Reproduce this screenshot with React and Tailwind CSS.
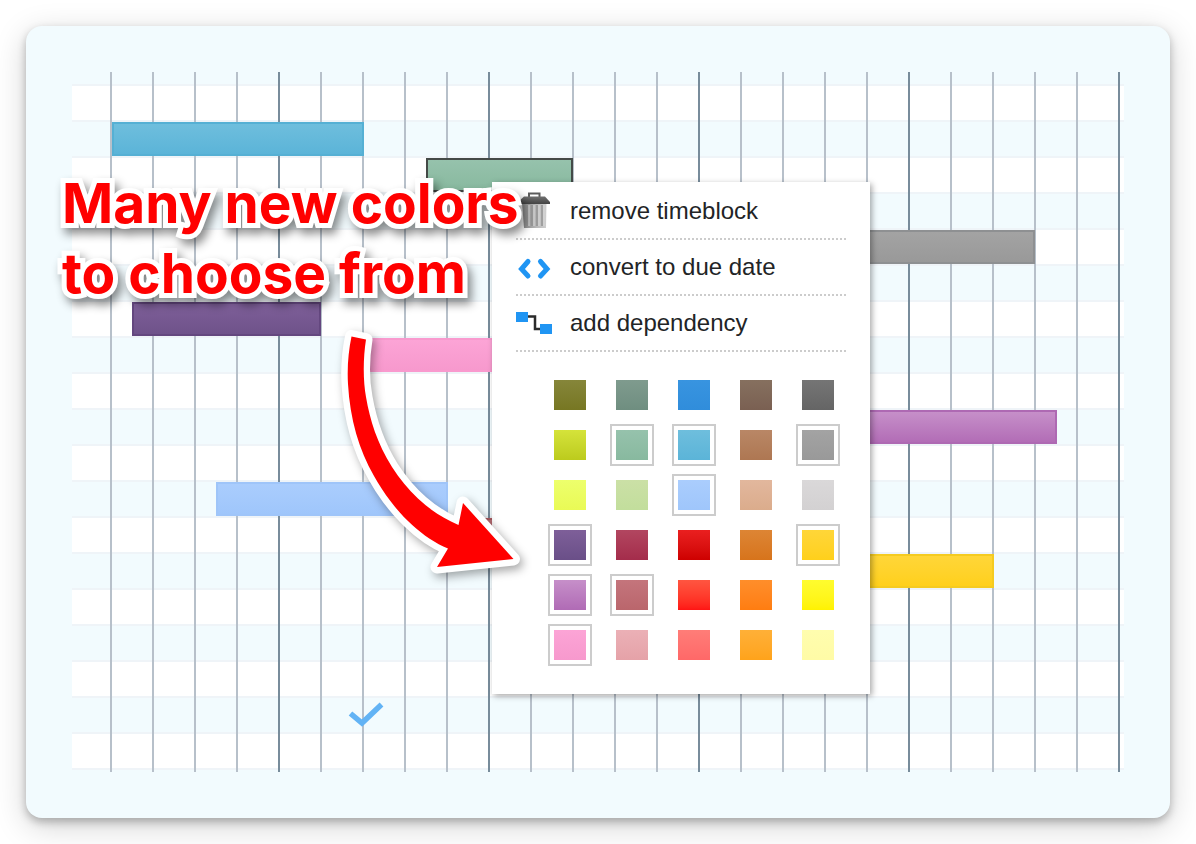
import React from "react";

const ROW_COUNT = 19;
const LINE_COUNT = 25;

const BLOCKS = {
  1: { start: 40, width: 252, tone: "border-[#55b0d4] from-[#6ebedd] to-[#5bb4d8]", label: "Blue timeblock" },
  2: { start: 354, width: 147, tone: "border-[#444a47] from-[#96c2ac] to-[#88b99f]", label: "Green timeblock" },
  4: { start: 700, width: 263, tone: "border-[#8e9092] from-[#a3a3a3] to-[#999999]", label: "Grey timeblock" },
  6: { start: 60, width: 189, tone: "border-[#64477f] from-[#7e5f99] to-[#6f528a]", label: "Purple timeblock" },
  7: { start: 286, width: 180, tone: "border-[#f99ace] from-[#fca4d6] to-[#f799cd]", label: "Pink timeblock" },
  9: { start: 700, width: 285, tone: "border-[#ae69b3] from-[#c68fc9] to-[#b26db6]", label: "Orchid timeblock" },
  11: { start: 144, width: 232, tone: "border-[#9fc5f9] from-[#aacdfd] to-[#9fc6fb]", label: "Sky timeblock" },
  12: { start: 411, width: 60, tone: "border-[#b05f65] from-[#c4757c] to-[#ba666c]", label: "Rose timeblock" },
  13: { start: 700, width: 222, tone: "border-[#f5cb20] from-[#ffd638] to-[#ffd01a]", label: "Yellow timeblock" },
};

const DUE_DATE = { row: 17, start: 274 };

const SWATCHES = [
  ["Olive", "from-[#86863a] to-[#777722]"],
  ["Sage", "from-[#7f9b8e] to-[#6f8e80]"],
  ["Blue", "from-[#3894e0] to-[#308ddb]"],
  ["Cocoa", "from-[#86705f] to-[#7a6052]"],
  ["Charcoal", "from-[#757575] to-[#656565]"],
  ["Lime", "from-[#d5e33a] to-[#bccb1c]"],
  ["Green", "from-[#96c2ac] to-[#88b99f]", true],
  ["Aqua", "from-[#6ebedd] to-[#5bb4d8]", true],
  ["Brown", "from-[#b98766] to-[#ae7752]"],
  ["Grey", "from-[#a3a3a3] to-[#999999]", true],
  ["Light lime", "from-[#edff6c] to-[#e9fa55]"],
  ["Light green", "from-[#cbe0a6] to-[#c2de9c]"],
  ["Sky", "from-[#aacdfd] to-[#9fc6fb]", true],
  ["Tan", "from-[#e2b79d] to-[#dbac8c]"],
  ["Silver", "from-[#dad8d9] to-[#d3d1d2]"],
  ["Purple", "from-[#7e5f99] to-[#6a4f88]", true],
  ["Crimson", "from-[#b24660] to-[#a42c4b]"],
  ["Red", "from-[#ea1f1f] to-[#ce0000]"],
  ["Burnt orange", "from-[#dd8534] to-[#d7741b]"],
  ["Gold", "from-[#ffd638] to-[#ffd01a]", true],
  ["Orchid", "from-[#c68fc9] to-[#b06bb5]", true],
  ["Rose", "from-[#c4757c] to-[#ba666c]", true],
  ["Scarlet", "from-[#ff5540] to-[#ff1414]"],
  ["Orange", "from-[#ff8e2a] to-[#ff7d10]"],
  ["Yellow", "from-[#fffc2e] to-[#fff200]"],
  ["Pink", "from-[#fca4d6] to-[#f799cd]", true],
  ["Light rose", "from-[#ebb0b6] to-[#e5a2a8]"],
  ["Coral", "from-[#ff7d78] to-[#ff6868]"],
  ["Amber", "from-[#ffb037] to-[#ffa31a]"],
  ["Pale yellow", "from-[#fffdae] to-[#fffba6]"],
];

function TrashIcon() {
  return (
    <svg width="40" height="40" viewBox="0 0 40 40" className="block" aria-hidden="true">
      <defs>
        <linearGradient id="bin" x1="0" x2="1" y1="0" y2="0">
          <stop offset="0" stopColor="#8a8a8a" />
          <stop offset="0.6" stopColor="#b8b8b8" />
          <stop offset="1" stopColor="#d0d0d0" />
        </linearGradient>
        <linearGradient id="lid" x1="0" x2="0" y1="0" y2="1">
          <stop offset="0" stopColor="#707070" />
          <stop offset="1" stopColor="#444444" />
        </linearGradient>
      </defs>
      <path d="M6 12h24.500l-.5 25H8z" fill="url(#bin)" />
      <path d="M11 14v21M16 14v21M21 14v21M26 14v21" stroke="#929292" strokeWidth="1.500" />
      <path d="M13 14v21M18 14v21M23 14v21M28 14v21" stroke="#d6d6d6" strokeWidth="1.200" />
      <path d="M13 6V2.500h10.500V6" fill="none" stroke="#5c5c5c" strokeWidth="2" />
      <path d="M8 5.500h21l5 5.500v2H2v-2z" fill="url(#lid)" />
    </svg>
  );
}

function ConvertIcon() {
  return (
    <svg width="40" height="40" viewBox="0 0 40 40" className="block" fill="none" stroke="#2095f3" strokeWidth="5" strokeLinecap="round" aria-hidden="true">
      <path d="M12 14.500L5.500 22l6.500 7M24.500 14.500L31 22l-6.500 7" />
    </svg>
  );
}

function DependencyIcon() {
  return (
    <svg width="40" height="40" viewBox="0 0 40 40" className="block" aria-hidden="true">
      <path d="M12 13.500h7V26h5" fill="none" stroke="#2b2b2b" strokeWidth="2.500" />
      <path d="M0 9h12v10H0zM24 21h12v10H24z" fill="#2095f3" />
    </svg>
  );
}

const ACTIONS = [
  ["remove timeblock", TrashIcon],
  ["convert to due date", ConvertIcon],
  ["add dependency", DependencyIcon],
];

function ContextMenu() {
  return (
    <div role="menu" className="absolute left-[466px] top-[156px] z-20 w-[378px] bg-white px-6 pb-7 pt-[2px] shadow-[2px_2px_6px_rgba(0,0,0,0.35)]">
      {ACTIONS.map(([label, Icon]) => (
        <button
          key={label}
          type="button"
          role="menuitem"
          className="flex h-14 w-full items-center gap-[14px] border-b-2 border-dotted border-[#cccccc] text-left text-2xl text-[#222426]"
        >
          <Icon />
          <span>{label}</span>
        </button>
      ))}
      <div className="ml-8 mt-[22px] grid w-max grid-cols-5 gap-x-[18px] gap-y-2">
        {SWATCHES.map(([name, tone, used]) => (
          <button
            key={name}
            type="button"
            aria-label={name}
            className={`border-2 p-1 ${used ? "border-[#cccccc]" : "border-transparent"}`}
          >
            <span className={`block h-[30px] w-8 bg-linear-to-b ${tone}`} />
          </button>
        ))}
      </div>
    </div>
  );
}

function DueDateMark() {
  return (
    <svg width="40" height="32" viewBox="0 0 40 32" className="relative z-10 block" style={{ marginLeft: DUE_DATE.start }} fill="none" stroke="#62b3f5" strokeWidth="5.500" role="img" aria-label="Due date">
      <path d="M4.500 15.500L16 25L35.500 6.500" />
    </svg>
  );
}

function Row({ index }) {
  const block = BLOCKS[index];
  return (
    <div className={`flex h-9 border-t-2 border-[#eff4f8] ${index % 2 ? "bg-[#f2fbfe]" : "bg-white"}`}>
      {block && (
        <div
          title={block.label}
          className={`relative z-10 shrink-0 border-2 bg-linear-to-b ${block.tone}`}
          style={{ marginLeft: block.start, width: block.width }}
        />
      )}
      {index === DUE_DATE.row && <DueDateMark />}
    </div>
  );
}

function Timeline() {
  return (
    <div className="relative overflow-hidden pb-[2px] pt-3">
      <div className="absolute inset-0 flex gap-10 pl-[38px]">
        {Array.from({ length: LINE_COUNT }, (_, day) => (
          <div key={day} className={`w-[2px] shrink-0 ${day % 5 === 4 ? "bg-[#788c9b]" : "bg-[#b7c0ca]"}`} />
        ))}
      </div>
      {Array.from({ length: ROW_COUNT }, (_, index) => (
        <Row key={index} index={index} />
      ))}
      <div className="border-t-2 border-[#eff4f8]" />
    </div>
  );
}

function Callout() {
  return (
    <>
      <p className="absolute left-[36px] top-[142px] z-30 whitespace-nowrap font-['Inter',sans-serif] text-[55px] font-bold leading-[70px] text-[#ff0000] [-webkit-text-stroke:10px_white] [paint-order:stroke_fill] [stroke-linejoin:round] drop-shadow-[4px_6px_5px_rgba(0,0,0,0.45)]">
        Many new colors
        <br />
        to choose from
      </p>
      <svg width="220" height="280" viewBox="320 320 220 280" className="absolute left-[294px] top-[294px] z-30 drop-shadow-[3px_4px_5px_rgba(0,0,0,0.35)]" aria-hidden="true">
        <path
          d="M351.500 336.500L366 339.500C363 358 363 381 366 397C370 420 377 443 392 467C408 492 430 513 458.500 525L463 503L513.500 559L437 567L448 548.500C420 537 393 510 374 476C359 450 350 419 348 384C347 367 348.500 351 351.500 336.500Z"
          fill="#ff0000"
          stroke="#ffffff"
          strokeWidth="13"
          strokeLinejoin="round"
          paintOrder="stroke"
        />
      </svg>
    </>
  );
}

export default function App() {
  return (
    <main className="bg-white p-[26px] font-['Liberation_Sans',Arial,sans-serif]">
      <section className="relative rounded-2xl bg-[#f2fbfe] p-[46px] shadow-[0_4px_8px_rgba(0,0,0,0.25),0_8px_32px_rgba(0,0,0,0.18)]">
        <Timeline />
        <ContextMenu />
        <Callout />
      </section>
    </main>
  );
}
